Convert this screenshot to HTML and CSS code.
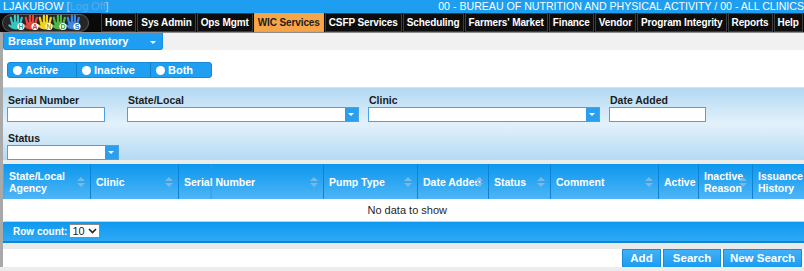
FILE: index.html
```html
<!DOCTYPE html>
<html lang="en">
<head>
  <meta charset="UTF-8">
  <title>Breast Pump Inventory</title>
  <link rel="stylesheet" href="styles.css">
</head>
<body>
  <div class="page">
    <div class="topbar">
      <span>LJAKUBOW <span class="logoff"><i>[</i>Log Off<i>]</i></span></span>
      <span class="scope">00 - BUREAU OF NUTRITION AND PHYSICAL ACTIVITY / 00 - ALL CLINICS</span>
    </div>

    <div class="menu">
      <div class="logo">
        <svg width="87" height="18" viewBox="0 0 87 18">
          <defs>
            <g id="hand">
              <ellipse cx="7" cy="11.5" rx="4.8" ry="4"/>
              <rect x="2" y="2.5" width="2.2" height="8" rx="1.1" transform="rotate(-14 3 9)"/>
              <rect x="4.8" y="0.8" width="2.2" height="8" rx="1.1"/>
              <rect x="7.8" y="0.8" width="2.2" height="8" rx="1.1"/>
              <rect x="10.4" y="2.5" width="2.2" height="8" rx="1.1" transform="rotate(14 11.5 9)"/>
              <rect x="0" y="10" width="2.2" height="6" rx="1.1" transform="rotate(-55 1 12)"/>
            </g>
          </defs>
          <rect x="0.5" y="0.5" width="86" height="17" rx="8.5" fill="#262626" stroke="#5a5a5a"/>
          <use href="#hand" x="7" y="0" fill="#35c6c4"/>
          <use href="#hand" x="22" y="0" fill="#e5463c"/>
          <use href="#hand" x="36" y="0" fill="#f3d321"/>
          <use href="#hand" x="50" y="0" fill="#4cb748"/>
          <use href="#hand" x="64" y="0" fill="#3f86e2"/>
          <g class="logo-letters">
            <circle cx="19" cy="12.5" r="3.6" fill="#fff"/>
            <text x="19" y="15.1" fill="#2aa5a3">H</text>
            <circle cx="33" cy="12.5" r="3.6" fill="#fff"/>
            <text x="33" y="15.1" fill="#d23a31">A</text>
            <circle cx="47" cy="12.5" r="3.6" fill="#fff"/>
            <text x="47" y="15.1" fill="#b69a0c">N</text>
            <circle cx="61" cy="12.5" r="3.6" fill="#fff"/>
            <text x="61" y="15.1" fill="#3b9a38">D</text>
            <circle cx="75" cy="12.5" r="3.6" fill="#fff"/>
            <text x="75" y="15.1" fill="#2f6fcc">S</text>
          </g>
        </svg>
      </div>
      <ul>
        <li>Home</li>
        <li>Sys Admin</li>
        <li>Ops Mgmt</li>
        <li class="active">WIC Services</li>
        <li>CSFP Services</li>
        <li>Scheduling</li>
        <li>Farmers' Market</li>
        <li>Finance</li>
        <li>Vendor</li>
        <li>Program Integrity</li>
        <li>Reports</li>
        <li>Help</li>
      </ul>
    </div>

    <div class="body">
      <div class="subbar">
        <div class="pagepick">Breast Pump Inventory <span class="caret"></span></div>
      </div>

      <div class="radios">
        <div class="radio-group">
          <label class="seg seg-active"><span class="dot"></span>Active</label>
          <label class="seg seg-inactive"><span class="dot"></span>Inactive</label>
          <label class="seg seg-both"><span class="dot"></span>Both</label>
        </div>
      </div>

      <div class="filters">
        <div class="filter-row">
          <div class="field">
            <div class="lbl">Serial Number</div>
            <div class="inp w-serial"></div>
          </div>
          <div class="field">
            <div class="lbl">State/Local</div>
            <div class="inp combo w-wide"><span class="drop"></span></div>
          </div>
          <div class="field">
            <div class="lbl">Clinic</div>
            <div class="inp combo w-wide"><span class="drop"></span></div>
          </div>
          <div class="field">
            <div class="lbl">Date Added</div>
            <div class="inp w-date"></div>
          </div>
        </div>
        <div class="filter-row second">
          <div class="field">
            <div class="lbl">Status</div>
            <div class="inp combo w-status"><span class="drop"></span></div>
          </div>
        </div>
      </div>

      <table class="grid">
        <colgroup>
          <col class="c1"><col class="c2"><col class="c3"><col class="c4"><col class="c5">
          <col class="c6"><col class="c7"><col class="c8"><col class="c9"><col class="c10">
        </colgroup>
        <thead>
          <tr>
            <th><div class="th">State/Local<br>Agency<span class="sort"></span></div></th>
            <th><div class="th">Clinic<span class="sort"></span></div></th>
            <th class="split"><div class="th">Serial Number<span class="sort"></span></div></th>
            <th><div class="th">Pump Type<span class="sort"></span></div></th>
            <th><div class="th">Date Added<span class="sort"></span></div></th>
            <th><div class="th">Status<span class="sort"></span></div></th>
            <th><div class="th">Comment<span class="sort"></span></div></th>
            <th><div class="th">Active</div></th>
            <th><div class="th">Inactive<br>Reason<span class="sort"></span></div></th>
            <th><div class="th">Issuance<br>History</div></th>
          </tr>
        </thead>
        <tbody>
          <tr><td colspan="10" class="empty">No data to show</td></tr>
        </tbody>
      </table>

      <div class="pager">
        Row count: <span class="rowsel">10 <svg width="9" height="6" viewBox="0 0 9 6"><path d="M1 1l3.5 3.5L8 1" fill="none" stroke="#222" stroke-width="1.6"/></svg></span>
      </div>

      <div class="spacer"></div>

      <div class="actions">
        <button class="btn btn-add">Add</button>
        <button class="btn btn-search">Search</button>
        <button class="btn btn-new">New Search</button>
      </div>
    </div>
  </div>
</body>
</html>
```

FILE: styles.css
```css
* { box-sizing: border-box; }
body { margin: 0; font-family: "Liberation Sans", Arial, sans-serif; font-size: 11px; color: #222; background: #fff; }
.page { width: 804px; height: 271px; overflow: hidden; background: #ececec; }

/* top strip */
.topbar { display: flex; justify-content: space-between; height: 13px; line-height: 13px; padding-left: 3px; background: #1d9ef0; color: #fff; font-size: 11px; white-space: nowrap; }
.topbar .scope { font-size: 10.6px; }
.logoff { color: #5ea9e6; }
.logoff i { font-style: normal; color: #b3d6f2; }

/* main menu */
.menu { display: flex; height: 19px; background: #0a0a0a; overflow: hidden; }
.logo { flex: none; width: 101px; padding: 1px 0 0 2px; }
.logo svg { display: block; }
.logo-letters text { font-family: "Liberation Sans", Arial, sans-serif; font-size: 7px; font-weight: bold; text-anchor: middle; }
.menu ul { display: flex; flex: none; gap: 1px; list-style: none; margin: 0; padding: 0; white-space: nowrap; }
.menu li { height: 19px; line-height: 17px; padding: 0 3px; border: 1px solid #3d3d3d; background: #0d0d0d; color: #fff; font-size: 10px; font-weight: bold; letter-spacing: -0.11px; }
.menu li.active { background: #f7a548; border-color: #f0a040; color: #222; }

.body { border-left: 3px solid #a9a9a9; border-top: 1px solid #8c8c8c; }

/* page picker */
.subbar { height: 17px; background: #f1f1f1; }
.pagepick { position: relative; width: 160px; height: 17px; line-height: 16px; padding-left: 4px; background: #1e9ef2; border: 1px solid #1a8ede; border-top: 0; border-radius: 0 0 3px 3px; color: #fff; font-weight: bold; font-size: 11px; }
.caret { position: absolute; right: 6px; top: 8px; border: 3px solid transparent; border-top: 3px solid #fff; }

/* active/inactive/both */
.radios { height: 37px; padding: 12px 0 0 4px; background: #fff; }
.radio-group { display: flex; width: 205px; height: 16px; background: #1e9ff2; border: 1px solid #1786d4; border-radius: 3px; }
.seg { display: flex; align-items: center; gap: 3px; padding-left: 5px; color: #fff; font-weight: bold; font-size: 11px; }
.seg + .seg { border-left: 1px solid #1280cc; }
.seg-active { width: 68px; }
.seg-inactive { width: 74px; }
.seg-both { flex: 1; }
.dot { width: 9px; height: 9px; border-radius: 50%; background: #fff; }

/* filter panel */
.filters { height: 73px; padding: 6px 0 0 4px; background: linear-gradient(#b2d9f3, #e3f1fb 50%, #b5daf4); border-top: 1px solid #cfe6f7; }
.filter-row { display: grid; grid-template-columns: 120px 241px 241px 97px; }
.filter-row.second { margin-top: 10px; }
.lbl { height: 13px; padding-left: 1px; font-weight: bold; font-size: 10.5px; color: #1b1b1b; }
.inp { position: relative; height: 15px; background: #fff; border: 1px solid #4aa2e2; }
.w-serial { width: 98px; }
.w-wide { width: 232px; }
.w-date { width: 97px; }
.w-status { width: 112px; }
.drop { position: absolute; right: 0; top: 0; width: 13px; height: 13px; background: #2a9fee; }
.drop::after { content: ""; position: absolute; left: 3px; top: 5px; border: 3px solid transparent; border-top: 3px solid #fff; }

/* data grid */
.grid { width: 809px; table-layout: fixed; border-collapse: collapse; margin-top: 4px; background: #fff; }
.c1 { width: 87px; } .c2 { width: 88px; } .c3 { width: 145px; } .c4 { width: 94px; } .c5 { width: 71px; }
.c6 { width: 62px; } .c7 { width: 108px; } .c8 { width: 40px; } .c9 { width: 54px; } .c10 { width: 60px; }
.grid th { height: 35px; padding: 0; background: linear-gradient(#0b97ee, #4eb5f6); border-left: 1px solid #49a9ea; border-right: 1px solid #0c84d6; color: #fff; font-weight: bold; font-size: 10.5px; text-align: left; vertical-align: middle; }
.th { position: relative; padding: 0 14px 0 5px; line-height: 12px; white-space: nowrap; }
.sort { position: absolute; right: 5px; top: 50%; margin-top: -6px; width: 8px; height: 12px; }
.sort::before, .sort::after { content: ""; position: absolute; left: 0; border: 4px solid transparent; }
.sort::before { top: -3px; border-bottom: 4px solid #7ab9e4; }
.sort::after { top: 7px; border-top: 4px solid #7ab9e4; }
.grid th.split { background: linear-gradient(90deg, transparent 31px, #2a9ae6 31px, #2a9ae6 32px, transparent 32px), linear-gradient(#0b97ee, #4eb5f6); }
.grid td.empty { height: 22px; text-align: left; padding-left: 364px; font-size: 11px; color: #1e1e1e; border-bottom: 1px solid #cfcfcf; }

.pager { height: 21px; display: flex; align-items: center; gap: 2px; padding-left: 10px; background: linear-gradient(#0f99ef, #2ea9f5); border-bottom: 2px solid #0e84d2; color: #fff; font-weight: bold; font-size: 10px; }
.rowsel { display: inline-flex; align-items: center; gap: 3px; height: 14px; padding: 0 2px; background: #fff; border: 1px solid #8a8a8a; color: #222; font-weight: normal; font-size: 11px; }

.spacer { height: 6px; background: #e9e9e9; }

.actions { display: flex; justify-content: flex-end; gap: 2px; height: 18px; padding-right: 2px; background: #fff; }
.btn { height: 18px; padding: 0; border: 1px solid #1b8cda; border-bottom: 0; background: linear-gradient(#41b1f8, #1a9cf0); color: #fff; font-family: "Liberation Sans", Arial, sans-serif; font-weight: bold; font-size: 11.5px; }
.btn-add { width: 39px; }
.btn-search { width: 58px; }
.btn-new { width: 79px; }
```
